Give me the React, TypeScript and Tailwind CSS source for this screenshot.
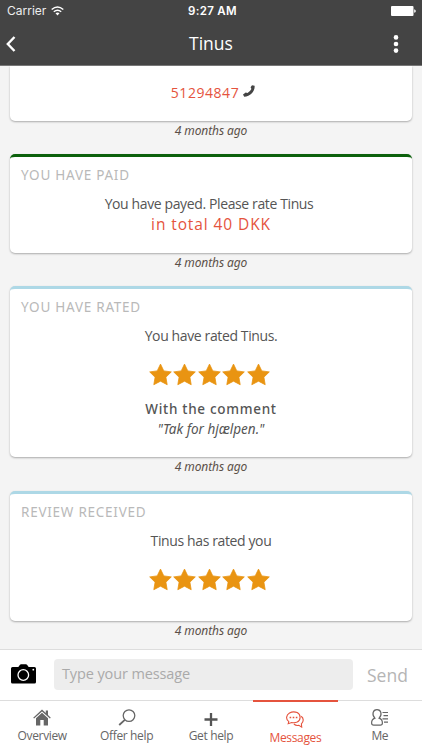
import { ReactNode } from "react";

interface MessageCardProps {
  title: string;
  accent: string;
  height: string;
  children: ReactNode;
}

const navItem =
  "flex flex-1 flex-col items-center pt-[8px] text-[12px] leading-[16px] tracking-[-0.35px] text-[#666]";
const bodyText = "mt-[9px] text-[14px] leading-[20px] tracking-[-0.38px]";

function Timestamp() {
  return (
    <p className="h-[33px] shrink-0 pt-[1px] text-center font-['Noto_Sans',sans-serif] text-[12px] leading-[18px] tracking-[-0.1px] italic text-[#5b5048]">
      4 months ago
    </p>
  );
}

function MessageCard({ title, accent, height, children }: MessageCardProps) {
  return (
    <div
      className={`${height} ${accent} shrink-0 rounded-[5px] border-t-[3px] bg-white px-[11px] text-center text-[#555] shadow-[0_1px_2px_rgba(0,0,0,0.3)]`}
    >
      <h2 className="pt-[9px] text-left font-['Noto_Sans',sans-serif] text-[13.5px] leading-[19px] tracking-[0.75px] text-[#b9b9b9]">
        {title}
      </h2>
      {children}
    </div>
  );
}

function Stars() {
  return (
    <div className="mt-[17px] flex justify-center gap-[1.5px] pr-[4px]">
      {[1, 2, 3, 4, 5].map((star) => (
        <svg key={star} viewBox="0 0 23 22" className="h-[23px] w-[23px]" fill="#e99412">
          <path
            d="M11.5 0.6 14.8 7.4 22.3 8.4 16.9 13.7 18.2 21.2 11.5 17.7 4.8 21.2 6.1 13.7 0.7 8.4 8.2 7.4Z"
            stroke="#e99412"
            strokeWidth="0.8"
            strokeLinejoin="round"
          />
        </svg>
      ))}
    </div>
  );
}

function Header() {
  return (
    <header className="h-[66px] shrink-0 border-b border-[#777] bg-[#444] text-white">
      {/* Status bar */}
      <div className="grid h-[22px] grid-cols-3 items-center pl-[7px] pr-[6px] font-[Inter,sans-serif] text-[11.5px]">
        <div className="flex items-center gap-[5px] text-[#eee]">
          <span className="text-[12px]">Carrier</span>
          <svg viewBox="0 0 13 10" className="h-[10px] w-[13px]" fill="none" stroke="white" strokeWidth="1.5">
            <path d="M0.7 3.5Q6.5-1.5 12.3 3.5M2.8 5.8Q6.5 2.6 10.2 5.8" />
            <path d="M6.5 9.4 4.5 7.3Q6.5 5.7 8.5 7.3Z" fill="white" stroke="none" />
          </svg>
        </div>
        <span className="pl-[2px] pt-px text-center font-semibold tracking-[0.3px]">9:27 AM</span>
        <svg viewBox="0 0 25 10" className="h-[10px] w-[25px] justify-self-end" fill="white">
          <rect width="22.5" height="10" rx="1" />
          <path d="M23.2 3.2Q24.8 3.6 24.8 5T23.2 6.8Z" />
        </svg>
      </div>
      {/* Title bar */}
      <div className="flex h-[43px] items-center justify-between pl-[6px] pr-[23px]">
        <svg viewBox="0 0 10 16" className="h-[16px] w-[10px]" fill="none" stroke="white" strokeWidth="2.4">
          <path d="M8.5 1 1.8 8 8.5 15" />
        </svg>
        <h1 className="pl-[13px] text-[17.5px]">Tinus</h1>
        <svg viewBox="0 0 6 18" className="h-[18px] w-[6px]" fill="white">
          <circle cx="3" cy="2.4" r="2.3" />
          <circle cx="3" cy="9" r="2.3" />
          <circle cx="3" cy="15.6" r="2.3" />
        </svg>
      </div>
    </header>
  );
}

function Composer() {
  return (
    <div className="flex h-[51px] shrink-0 items-center border-t border-[#ddd] bg-white">
      <svg viewBox="0 0 25 20" className="mb-[2px] ml-[11px] h-[20px] w-[25px]">
        <path
          d="M1.5 3H7.3L9 0.8Q9.4 0.3 10 0.3H15Q15.6 0.3 16 0.8L17.7 3H23.5Q25 3 25 4.5V18Q25 19.5 23.5 19.5H1.5Q0 19.5 0 18V4.5Q0 3 1.5 3Z"
          fill="#000"
        />
        <circle cx="12.3" cy="11" r="5.3" fill="none" stroke="white" strokeWidth="1.3" />
        <circle cx="22.3" cy="5.7" r="0.9" fill="white" />
      </svg>
      <div className="mb-[2px] ml-[18px] h-[31px] w-[299px] rounded-[4px] bg-[#ededed] pl-[8px] text-[14.5px] leading-[29px] tracking-[-0.12px] text-[#aaa]">
        Type your message
      </div>
      <span className="ml-[14px] text-[17.5px] text-[#b5b5b5]">Send</span>
    </div>
  );
}

function BottomNav() {
  return (
    <nav className="flex h-[50px] shrink-0 border-t border-[#ddd] bg-white">
      <div className={navItem}>
        <svg viewBox="0 0 18 17" className="h-[17px] w-[18px]" fill="#666">
          <path d="M9 0.5 12.8 4V1.5H15V6L17.8 8.7 16.9 9.6 9 2.4 1.1 9.6 0.2 8.7Z" />
          <path d="M9 3.7 15 9.2V16.5H10.7V11H7.3V16.5H3V9.2Z" />
        </svg>
        <span className="mt-[2px]">Overview</span>
      </div>
      <div className={navItem}>
        <svg viewBox="0 0 18 17" className="h-[17px] w-[18px]" fill="none" stroke="#666">
          <circle cx="11" cy="6.6" r="5.8" strokeWidth="1.3" />
          <path d="M6.8 10.8 1.2 16" strokeWidth="1.8" />
        </svg>
        <span className="mt-[2px]">Offer help</span>
      </div>
      <div className={navItem}>
        <svg viewBox="0 0 18 17" className="h-[17px] w-[18px]" stroke="#555" strokeWidth="2.3">
          <path d="M9 4V17M2.5 10.5H15.5" />
        </svg>
        <span className="mt-[2px]">Get help</span>
      </div>
      <div className="-mt-px flex flex-1 flex-col items-center border-t-2 border-[#e5533d] pt-[9px] text-[12px] leading-[16px] tracking-[-0.35px] text-[#e5533d]">
        <svg viewBox="0 0 18 17" className="h-[17px] w-[18px]" fill="none" stroke="#e5533d" strokeWidth="1.1">
          <path d="M2.8 10.6C-0.7 8.3 0.3 3.9 3.5 2Q7.2-0.1 11.2 1.6C15.2 3.8 14.9 9.2 11.2 11.1Q8.5 12.3 5.7 11.5L2.2 12.7Z" />
          <path d="M15.2 5.2C17.8 7.1 17.9 10.6 15.4 12.8L15.7 16.1 12.9 14.3Q10 15 7.9 13" />
          <path d="M3.6 6.4H5.2M6.7 6.4H8.3M9.8 6.4H11.4" strokeWidth="1.5" />
        </svg>
        <span className="mt-[2px]">Messages</span>
      </div>
      <div className={navItem}>
        <svg viewBox="0 0 18 17" className="h-[17px] w-[18px]" fill="none" stroke="#666" strokeWidth="1.2">
          <path d="M3.9 9.1C2.2 7.5 1.7 5.5 2.1 3.7 2.6 1.6 4 0.7 6 0.7S9.4 1.6 9.9 3.7C10.3 5.5 9.8 7.5 8.1 9.1 10.6 10 11.4 11.2 11.4 14Q11.4 16.2 9.3 16.2H2.7Q0.6 16.2 0.6 14C0.6 11.2 1.4 10 3.9 9.1Z" />
          <path d="M11.5 3.5H17M12.5 6.7H17M11.5 9.9H17M13 13.1H17" />
        </svg>
        <span className="mt-[2px]">Me</span>
      </div>
    </nav>
  );
}

export default function App() {
  return (
    <div className="flex h-[750px] w-[422px] flex-col overflow-hidden bg-[#f4f4f4] font-['Open_Sans',sans-serif]">
      <Header />
      <main className="flex h-[583px] shrink-0 flex-col overflow-hidden px-[10px]">
        <div className="flex h-[55px] shrink-0 items-center justify-center gap-[4px] rounded-b-[5px] bg-white pb-[3px] pl-[4px] text-[14px] tracking-[0.55px] text-[#e5533d] shadow-[0_1px_2px_rgba(0,0,0,0.3)]">
          <span>51294847</span>
          <svg viewBox="0 0 12 12" className="mb-[3px] h-[12px] w-[12px]">
            <path
              d="M9 0.2 11.6 0.8C12.2 6 7.5 11.4 1.2 11.7L0 9.4 2.7 7.4 4.5 8.1Q7 6.5 8.4 3.9L7.6 2.2Z"
              fill="#444"
            />
          </svg>
        </div>
        <Timestamp />

        <MessageCard title="YOU HAVE PAID" accent="border-[#0c610c]" height="h-[99px]">
          <p className={`${bodyText} pr-[4px]`}>You have payed. Please rate Tinus</p>
          <p className="text-[15.5px] leading-[20px] tracking-[0.9px] text-[#e5533d]">in total 40 DKK</p>
        </MessageCard>
        <Timestamp />

        <MessageCard title="YOU HAVE RATED" accent="border-[#add8e6]" height="h-[171px]">
          <p className={bodyText}>You have rated Tinus.</p>
          <Stars />
          <p className="mt-[13px] font-['Noto_Sans',sans-serif] text-[13.5px] leading-[20px] font-medium tracking-[0.7px]">
            With the comment
          </p>
          <p className="font-['Noto_Sans',sans-serif] text-[13.5px] leading-[21px] italic">"Tak for hjælpen."</p>
        </MessageCard>
        <Timestamp />

        <MessageCard title="REVIEW RECEIVED" accent="mt-px border-[#add8e6]" height="h-[130px]">
          <p className={bodyText}>Tinus has rated you</p>
          <Stars />
        </MessageCard>
        <Timestamp />
      </main>
      <Composer />
      <BottomNav />
    </div>
  );
}
